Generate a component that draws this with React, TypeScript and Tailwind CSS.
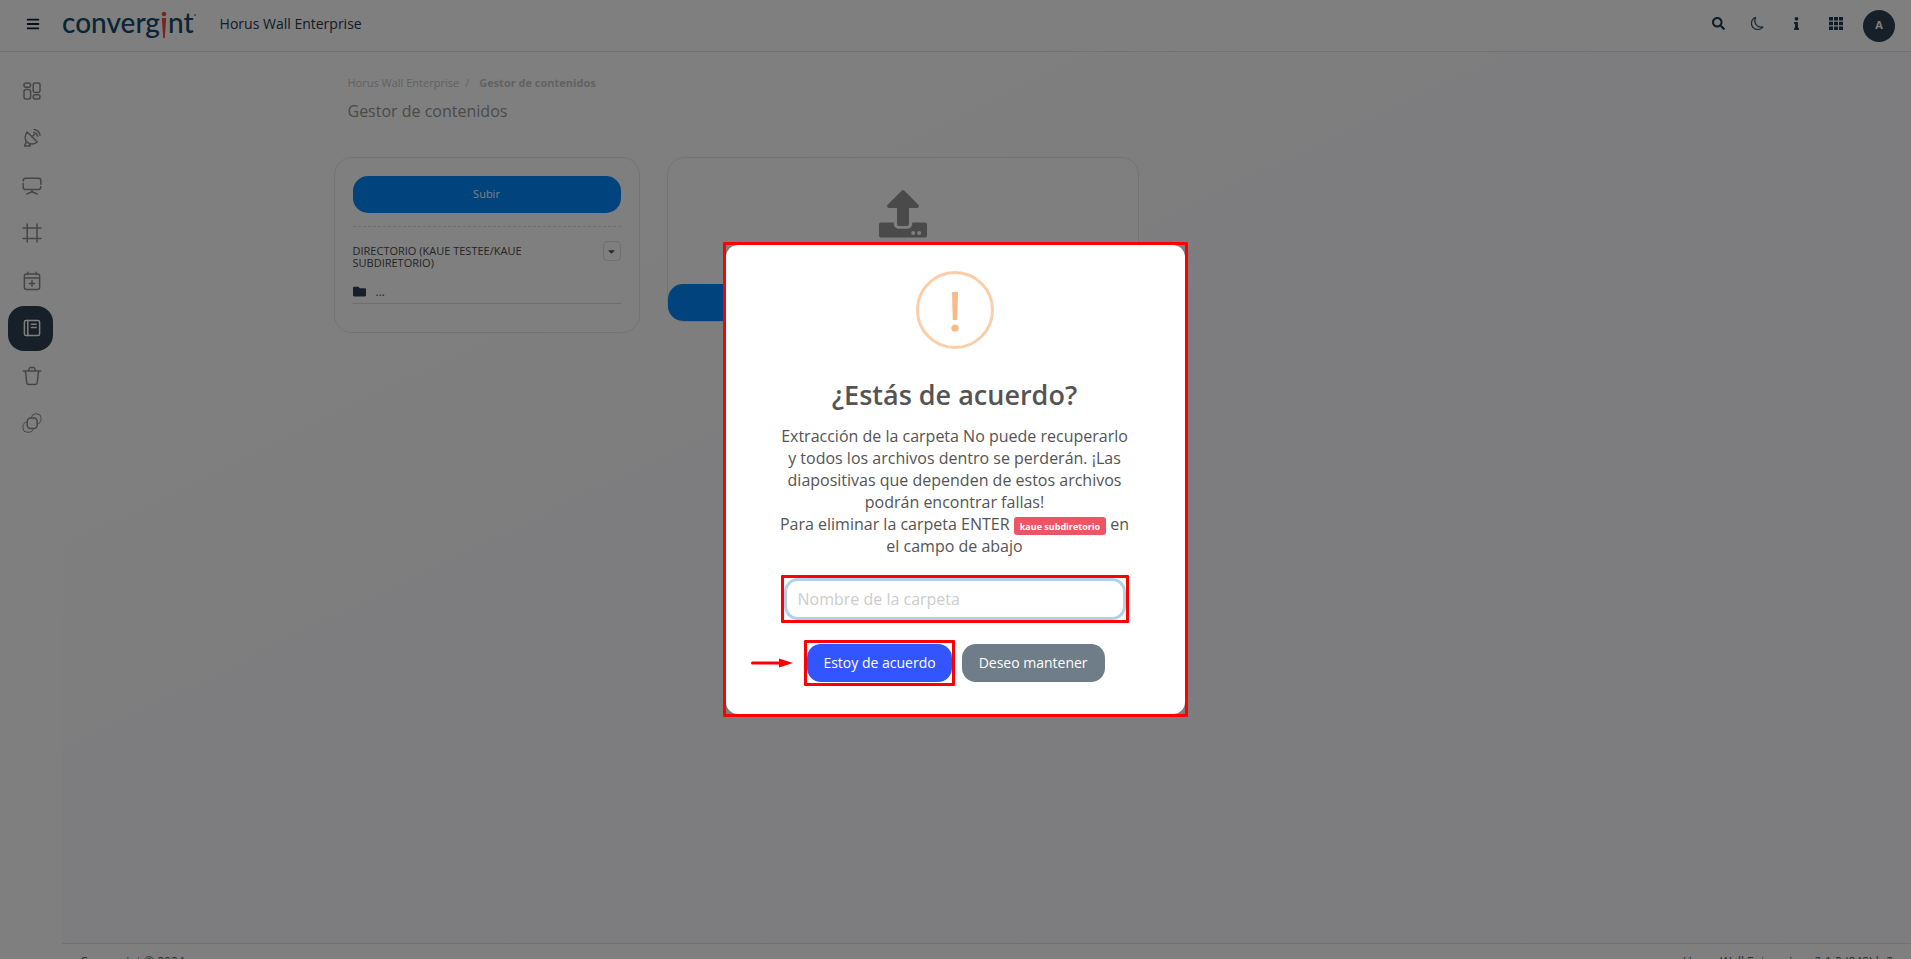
import { useState } from 'react';
import type { ReactNode } from 'react';
import clsx from 'clsx';
import { BsMoon } from 'react-icons/bs';
import { FaBars, FaCaretDown, FaFolder, FaInfo, FaSearch } from 'react-icons/fa';

interface IconProps {
  children: ReactNode;
}

function MenuIcon({ children }: IconProps) {
  return (
    <svg
      viewBox="0 0 20 20"
      className="size-5"
      fill="none"
      stroke="currentColor"
      strokeWidth="1.5"
      strokeLinecap="round"
      strokeLinejoin="round"
      aria-hidden="true"
    >
      {children}
    </svg>
  );
}

const menu = [
  {
    label: 'Panel',
    icon: (
      <>
        <rect x="2" y="2" width="6.6" height="4.2" rx="2" />
        <rect x="2" y="8.6" width="6.6" height="9.4" rx="2" />
        <rect x="11.2" y="2" width="6.8" height="9.4" rx="2" />
        <rect x="11.2" y="13.8" width="6.8" height="4.2" rx="2" />
      </>
    ),
  },
  {
    label: 'Antena',
    icon: (
      <>
        <path d="M5.2 4C2.4 7.2 2.6 12 5.2 14.2c2.8 2.4 7.2 2.4 10.1-.2Z" />
        <path d="M10 8.8l2.2-2.2M4.4 13.6 2.6 18h5.8l-1.2-2.4" />
        <path d="M11.8 4.4a4.8 4.8 0 0 1 3.8 3.8M12.2 1.6a7.2 7.2 0 0 1 5.8 5.6" />
      </>
    ),
  },
  {
    label: 'Pantallas',
    icon: (
      <>
        <path d="M1.2 5v-.4a2.4 2.4 0 0 1 2.4-2.4h12.8a2.4 2.4 0 0 1 2.4 2.4v3.6" />
        <path d="M1.2 7.4v3.8a2.4 2.4 0 0 0 2.4 2.4h12.8a2.4 2.4 0 0 0 2.4-2.4v-.6" />
        <path d="M10 13.6v2M4.8 18l5.2-2.2 5.2 2.2" />
      </>
    ),
  },
  {
    label: 'Marcos',
    icon: <path d="M5.2 1v18M15 1v18M1 5h18M1 15.6h18" />,
  },
  {
    label: 'Calendario',
    icon: (
      <>
        <rect x="2.4" y="3" width="15.2" height="15.4" rx="2" />
        <path d="M6 1.2V3M14 1.2V3M2.4 7h15.2M10 9.8v5.4M7.3 12.5h5.4" />
      </>
    ),
  },
  {
    label: 'Gestor de contenidos',
    active: true,
    icon: (
      <>
        <rect x="2.4" y="2.4" width="15.2" height="15.2" rx="1.6" />
        <path d="M5.8 2.4v15.2M9.4 6.2h4.8M9.4 9.4h4.8" />
      </>
    ),
  },
  {
    label: 'Papelera',
    icon: (
      <>
        <path d="M1.4 5h17.2M6.6 5l.6-2.4A1.3 1.3 0 0 1 8.5 1.5h3a1.3 1.3 0 0 1 1.3 1.1l.6 2.4" />
        <path d="M3.4 5.2l1.4 11.6a2 2 0 0 0 2 1.8h6.4a2 2 0 0 0 2-1.8l1.4-11.6" />
      </>
    ),
  },
  {
    label: 'Capas',
    icon: (
      <>
        <rect x="5.2" y="5" width="10" height="10.4" rx="3.4" />
        <path d="M9.4 4.6A4 4 0 0 1 13 .9h2a4 4 0 0 1 4 4v1.8a4 4 0 0 1-3.6 4" strokeWidth="1" />
        <path d="M5 9a4 4 0 0 0-4 4v2.2a4 4 0 0 0 4 4h2.2a4 4 0 0 0 4-3.6" strokeWidth="1" />
      </>
    ),
  },
];

function Logo() {
  return (
    <a
      href="#"
      aria-label="convergint"
      className="flex h-8 items-start font-['Lato','Liberation_Sans',sans-serif] text-[28px] leading-7 font-medium text-[#12496b]"
    >
      <span>converg</span>
      <svg viewBox="0 0 8 28" className="h-7 w-2 self-center" fill="#f04a3c" aria-hidden="true">
        <circle cx="4" cy="4" r="2.3" />
        <path d="M1.8 8h4.4l-1.4 20H3.2Z" />
      </svg>
      <span>nt</span>
      <span className="mt-[6px] size-[2px] rounded-full bg-[#6f8fae]" />
    </a>
  );
}

function Header() {
  return (
    <header className="flex h-[52px] items-center justify-between border-b border-[#e7e7e7] bg-white pr-4 pl-[26px] text-[#20384f]">
      <div className="flex items-center pb-1">
        <button type="button" aria-label="Menú" className="mr-[22px] text-[#111c2a]">
          <FaBars className="size-[14px]" />
        </button>
        <Logo />
        <h1 className="ml-6 text-sm font-medium">Horus Wall Enterprise</h1>
      </div>
      <div className="flex items-center">
        <button type="button" aria-label="Buscar" className="flex w-[39px] justify-center pb-1">
          <FaSearch className="size-[13px]" />
        </button>
        <button type="button" aria-label="Modo oscuro" className="flex w-[39px] justify-center pb-1">
          <BsMoon className="size-[13px]" stroke="currentColor" strokeWidth="0.4" />
        </button>
        <button type="button" aria-label="Información" className="flex w-[39px] justify-center pb-1">
          <FaInfo className="size-[13px]" />
        </button>
        <button type="button" aria-label="Aplicaciones" className="mr-2 flex w-[39px] justify-center pb-1">
          <svg viewBox="0 0 14 13" className="h-[13px] w-[14px]" fill="currentColor" aria-hidden="true">
            <path d="M0 0h4v3.6H0zM5 0h4v3.6H5zM10 0h4v3.6h-4zM0 4.7h4v3.6H0zM5 4.7h4v3.6H5zM10 4.7h4v3.6h-4zM0 9.4h4V13H0zM5 9.4h4V13H5zM10 9.4h4V13h-4z" />
          </svg>
        </button>
        <button
          type="button"
          className="size-8 rounded-full bg-[#2f4050] text-[11px] font-bold text-white"
        >
          A
        </button>
      </div>
    </header>
  );
}

function Sidebar() {
  return (
    <nav className="w-[62px] shrink-0 bg-white px-2 pt-4">
      <ul className="flex h-[378px] flex-col justify-between">
        {menu.map(item => (
          <li key={item.label}>
            <a
              href="#"
              aria-label={item.label}
              className={clsx(
                'flex size-[45px] items-center justify-center rounded-2xl pl-[2px]',
                item.active ? 'bg-[#2f4050] text-white' : 'text-[#8c8c8c]',
              )}
            >
              <MenuIcon>{item.icon}</MenuIcon>
            </a>
          </li>
        ))}
      </ul>
    </nav>
  );
}

function Directory() {
  return (
    <section className="w-[306px] shrink-0 rounded-[18px] border border-[#e7e7e7] bg-white px-[18px] pt-[18px] pb-7">
      <button
        type="button"
        className="h-[37px] w-full rounded-[15px] bg-[#0087fb] text-[11px] text-white"
      >
        Subir
      </button>
      <hr className="mt-[13px] border-dashed border-[#dedede]" />
      <div className="mt-[14px] flex items-start justify-between">
        <h3 className="w-[190px] pt-1 text-[11px] leading-3 font-medium text-[#4a4a4a]">
          DIRECTORIO (KAUE TESTEE/KAUE SUBDIRETORIO)
        </h3>
        <button
          type="button"
          aria-label="Opciones"
          className="flex h-5 w-[18px] items-center justify-center rounded border border-[#e0e0e0] text-[#555]"
        >
          <FaCaretDown className="size-[11px]" />
        </button>
      </div>
      <a
        href="#"
        className="mt-[11px] flex h-6 items-center gap-[10px] border-b border-[#dcdcdc] text-xs text-[#555]"
      >
        <FaFolder className="size-[13px] text-[#2f4050]" />
        ...
      </a>
    </section>
  );
}

function UploadCard() {
  return (
    <section className="flex h-[165px] w-[472px] flex-col justify-between rounded-[18px] border border-[#e7e7e7] bg-white">
      <svg viewBox="0 0 48 48" className="mx-auto mt-8 size-12 shrink-0" fill="#949494" aria-hidden="true">
        <path d="M22.6.7a2 2 0 0 1 2.8 0l14 14c1.2 1.2.4 3.2-1.4 3.2h-8V34a2 2 0 0 1-2 2h-8a2 2 0 0 1-2-2V17.900h-8c-1.8 0-2.6-2-1.4-3.2z" />
        <path
          fillRule="evenodd"
          d="M2 32.5h12.8V34A5 5 0 0 0 20 38.800h8A5 5 0 0 0 33.2 34v-1.5H46a2 2 0 0 1 2 2V45.500a2 2 0 0 1-2 2H2a2 2 0 0 1-2-2V34.500a2 2 0 0 1 2-2zM34.2 41a2 2 0 1 0 0 4 2 2 0 0 0 0-4zm6 0a2 2 0 1 0 0 4 2 2 0 0 0 0-4z"
        />
      </svg>
      <button
        type="button"
        aria-label="Enviar"
        className="h-[37px] w-full shrink-0 rounded-[15px] bg-[#0087fb]"
      />
    </section>
  );
}

function ConfirmModal() {
  const [name, setName] = useState('');

  return (
    <div className="fixed inset-0 flex items-center justify-center bg-black/50">
      <div className="w-[465px] rounded-[1px] border-3 border-[#ff0000]">
        <div
          role="dialog"
          aria-labelledby="confirm-title"
          className="flex flex-col items-center rounded-xl bg-white pt-[26px] pr-[51px] pb-7 pl-[49px] text-center text-[#545454]"
        >
          <svg viewBox="0 0 78 78" className="size-[78px]" aria-hidden="true">
            <circle cx="39" cy="39" r="37.5" fill="none" stroke="#facea8" strokeWidth="3" />
            <path d="M36 21h6l-.8 28h-4.4z" fill="#f8bb86" />
            <circle cx="39" cy="57.2" r="3.6" fill="#f8bb86" />
          </svg>
          <h2 id="confirm-title" className="mt-7 text-[27px] leading-9 font-semibold">
            ¿Estás de acuerdo?
          </h2>
          <label htmlFor="folder-name" className="mt-3 w-[352px] text-base leading-[22px]">
            Extracción de la carpeta No puede recuperarlo y todos los archivos dentro se perderán. ¡Las
            diapositivas que dependen de estos archivos podrán encontrar fallas!
            <br />
            Para eliminar la carpeta ENTER{' '}
            <span className="inline-block h-[18px] rounded-[3px] bg-[#ed5565] px-[6px] align-text-bottom text-[9px] leading-[19px] font-bold text-white">
              kaue subdiretorio
            </span>{' '}
            en el campo de abajo
          </label>
          <div className="mt-[18px] w-[348px] rounded-[1px] border-3 border-[#ff0000]">
            <input
              id="folder-name"
              type="text"
              value={name}
              onChange={e => setName(e.target.value)}
              placeholder="Nombre de la carpeta"
              className="block h-[42px] w-full rounded-[14px] border-3 border-[#b4d0e8] px-[11px] text-base outline-none placeholder:text-[#ccc]"
            />
          </div>
          <div className="relative mt-[17px] flex items-center gap-[7px] text-sm text-white">
            <svg
              viewBox="0 0 42 10"
              className="absolute -left-[53px] h-[10px] w-[42px]"
              fill="#ff0000"
              aria-hidden="true"
            >
              <path d="M1.5 3.5H28V.4L42 5 28 9.6V6.5H1.5a1.5 1.5 0 0 1 0-3z" />
            </svg>
            <div className="rounded-[1px] border-3 border-[#ff0000] py-px">
              <button type="button" className="h-[38px] rounded-[14px] bg-[#3355ff] px-4 font-medium">
                Estoy de acuerdo
              </button>
            </div>
            <button type="button" className="h-[38px] rounded-[14px] bg-[#6e7d88] px-[17px] font-medium">
              Deseo mantener
            </button>
          </div>
        </div>
      </div>
    </div>
  );
}

export default function App() {
  return (
    <div className="flex h-screen flex-col overflow-hidden bg-white font-['Open_Sans','Noto_Sans',sans-serif]">
      <Header />
      <div className="flex min-h-0 flex-1">
        <Sidebar />
        <div className="flex min-w-0 flex-1 flex-col">
          <main className="min-h-0 flex-1 bg-linear-to-br from-white from-20% to-[#fafaff] to-50%">
            <div className="mx-auto max-w-[1306px] pt-[23px]">
              <div className="pl-[14px]">
                <nav className="flex gap-[6px] text-[11px] leading-4 text-[#c4c4c4]">
                  <a href="#">Horus Wall Enterprise</a>
                  <span>/</span>
                  <span className="ml-1 font-bold">Gestor de contenidos</span>
                </nav>
                <h2 className="mt-2 text-base leading-6 text-[#949494]">Gestor de contenidos</h2>
              </div>
              <div className="mt-[34px] flex items-start gap-[27px]">
                <Directory />
                <UploadCard />
              </div>
            </div>
          </main>
          <footer className="flex h-4 shrink-0 items-start justify-between overflow-hidden border-t border-[#e3e3e3] bg-white px-[18px] pt-[10px] text-xs text-[#555]">
            <span>Convergint © 2024</span>
            <span>Horus Wall Enterprise - 3.1.3 (848) b.2</span>
          </footer>
        </div>
      </div>
      <ConfirmModal />
    </div>
  );
}
